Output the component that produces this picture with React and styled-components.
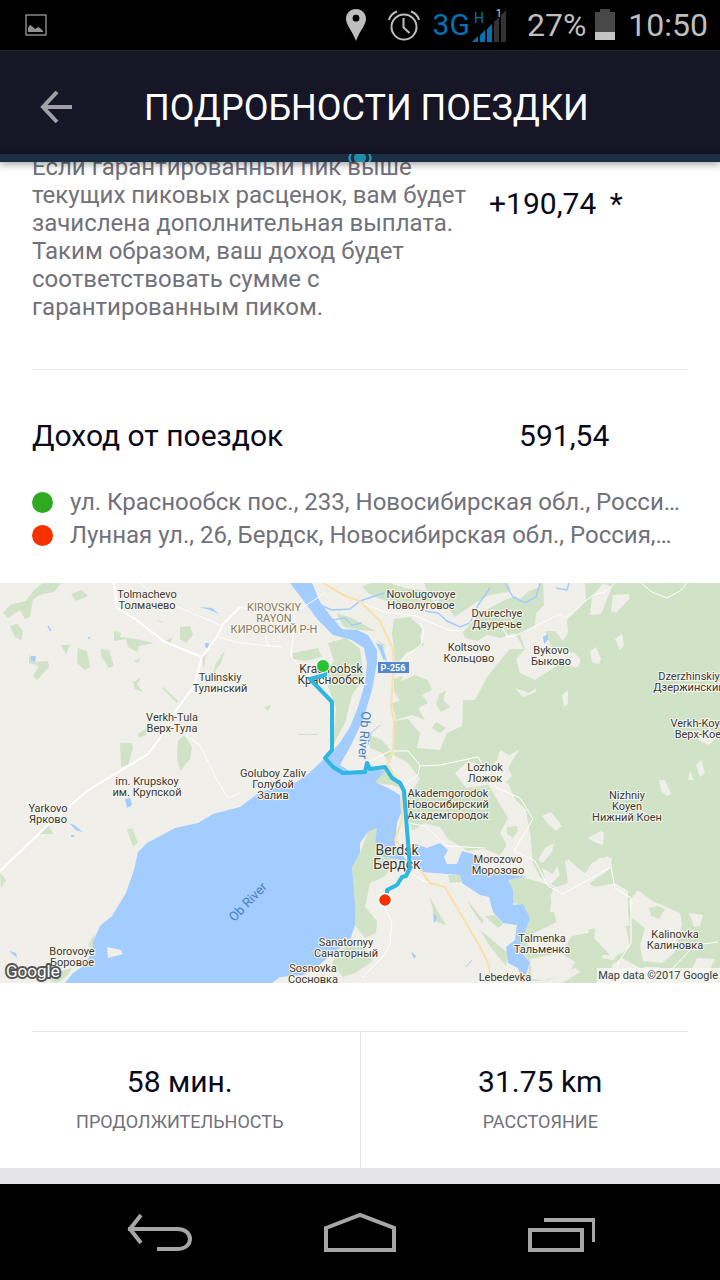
import React from "react";
import styled, { createGlobalStyle } from "styled-components";

const places = [
  { x: 147, y: 15, lines: ["Tolmachevo", "Толмачево"] },
  { x: 274, y: 28, lines: ["KIROVSKIY", "RAYON", "КИРОВСКИЙ Р-Н"], type: "district" },
  { x: 421, y: 15, lines: ["Novolugovoye", "Новолуговое"] },
  { x: 497, y: 34, lines: ["Dvurechye", "Двуречье"] },
  { x: 469, y: 68, lines: ["Koltsovo", "Кольцово"] },
  { x: 551, y: 71, lines: ["Bykovo", "Быково"] },
  { x: 220, y: 98, lines: ["Tulinskiy", "Тулинский"] },
  { x: 172, y: 138, lines: ["Verkh-Tula", "Верх-Тула"] },
  { x: 331, y: 90, lines: ["Krasnoobsk", "Краснообск"], type: "town" },
  { x: 689, y: 97, lines: ["Dzerzhinskiy", "Дзержинский"] },
  { x: 701, y: 144, lines: ["Verkh-Koyen", "Верх-Коен"] },
  { x: 485, y: 188, lines: ["Lozhok", "Ложок"] },
  { x: 147, y: 202, lines: ["im. Krupskoy", "им. Крупской"] },
  { x: 273, y: 194, lines: ["Goluboy Zaliv", "Голубой", "Залив"] },
  { x: 48, y: 229, lines: ["Yarkovo", "Ярково"] },
  { x: 448, y: 214, lines: ["Akademgorodok", "Новосибирский", "Академгородок"] },
  { x: 627, y: 216, lines: ["Nizhniy", "Koyen", "Нижний Коен"] },
  { x: 397, y: 272, lines: ["Berdsk", "Бердск"], type: "city" },
  { x: 498, y: 280, lines: ["Morozovo", "Морозово"] },
  { x: 72, y: 372, lines: ["Borovoye", "Боровое"] },
  { x: 346, y: 363, lines: ["Sanatornyy", "Санаторный"] },
  { x: 313, y: 389, lines: ["Sosnovka", "Сосновка"] },
  { x: 542, y: 359, lines: ["Talmenka", "Тальменка"] },
  { x: 505, y: 398, lines: ["Lebedevka"] },
  { x: 675, y: 355, lines: ["Kalinovka", "Калиновка"] },
];

const addresses = [
  { color: "#2fa91f", text: "ул. Краснообск пос., 233, Новосибирская обл., Росси…" },
  { color: "#f53100", text: "Лунная ул., 26, Бердск, Новосибирская обл., Россия,…" },
];

const stats = [
  { value: "58 мин.", label: "ПРОДОЛЖИТЕЛЬНОСТЬ" },
  { value: "31.75 km", label: "РАССТОЯНИЕ" },
];

function PlaceLabel({ x, y, lines, type }) {
  const step = type === "city" ? 14 : 11;
  return (
    <MapText $type={type}>
      {lines.map((line, i) => (
        <text key={line} x={x} y={y + i * step}>
          {line}
        </text>
      ))}
    </MapText>
  );
}

function StatusBar() {
  return (
    <Status>
      <svg width="22" height="22" viewBox="0 0 22 22">
        <rect x="1" y="1" width="20" height="20" fill="none" stroke="#929292" strokeWidth="1.4" />
        <path d="M3 18v-4l2-3 3 2 2 2 3-2 2 1 3 3v1z" fill="#929292" />
      </svg>
      <StatusIcons>
        <svg width="22" height="34" viewBox="0 0 22 34">
          <path
            d="M11 1C5 1 1 5.500 1 11c0 6 6.500 12 10 22 3.500-10 10-16 10-22C21 5.500 17 1 11 1zm0 5.800a3.400 3.400 0 1 1 0 6.800 3.400 3.400 0 0 1 0-6.800z"
            fill="#bebebe"
            fillRule="evenodd"
          />
        </svg>
        <svg width="34" height="34" viewBox="0 0 34 34" fill="none" stroke="#bebebe" strokeWidth="2">
          <circle cx="17" cy="19" r="12.500" />
          <path d="M16.500 10v9.500l6 5.500M2 12c1-4 4-7 8-8.500M32 12c-1-4-4-7-8-8.500" />
        </svg>
        <Signal>
          <NetworkType>3G</NetworkType>
          <svg width="36" height="36" viewBox="0 0 36 36">
            <text x="3" y="16" fontSize="14" fill="#0073b3">H</text>
            <path d="M1 35l6-6v6zM9 35V28l5-5v12zM16 35V22l5-5v18z" fill="#0073b3" />
            <path d="M23 35V15l5-5v25zM30 35V8l5-5v32z" fill="#333" />
            <text x="25" y="10" fontSize="10" fill="#ddd">1</text>
          </svg>
        </Signal>
        <StatusText>27%</StatusText>
        <svg width="22" height="34" viewBox="0 0 22 34">
          <path d="M1 4h5V1h10v3h5v28H1z" fill="#484848" />
          <path d="M1 24h20v8H1z" fill="#c4c4c4" />
        </svg>
        <StatusText>10:50</StatusText>
      </StatusIcons>
    </Status>
  );
}

function TripMap() {
  return (
    <MapView viewBox="0 0 720 400" role="img" aria-label="Маршрут поездки">
      <rect width="720" height="400" fill="#f0efea" />

      {/* forests */}
      <g fill="#d1e3c7">
        <path d="M480 0H720V400H562L580 389L575 385L547 398H527L530 380L515 357L517 342L530 335L523 322L513 320L508 297L520 294L540 299L553 304L550 329L560 329L557 339L530 352L548 358L570 350L596 345L594 355L610 372H602V375L613 377L625 364L624 355L618 346L630 342L628 330V308L615 300L595 304L588 300L605 290L612 283L608 273L592 280L585 291L568 276L566 286L574 299L556 304L540 294L533 280L530 250L526 227L512 213L505 200L512 193L508 185L519 167L509 172L500 167L497 177L490 185L468 178L455 190L466 205L488 202L505 215L508 235L500 250L507 262L500 272L484 266L468 268L448 256L440 244L425 240L412 248L405 218L420 196L408 180L394 172V138L408 136L420 150L417 165L440 167L447 150L462 143L463 117L475 117L487 94L503 74L510 66L524 66L515 50L500 55L480 50L465 45L480 30L505 17L540 4V0z" />
        <path d="M394 36L410 34L422 45L420 55L424 62L406 70L400 79L395 78L392 50zM394 96L403 93L400 99L415 92L428 97L432 107L422 112L428 120L418 125L425 137L412 132L396 137L392 120L400 118L394 108zM440 110L446 108L443 117L450 124L441 129L436 121zM436 139L446 145L440 150L432 145z" />
        <path d="M390 0H372L362 3L368 10L385 18L415 25L440 16L430 8L405 5zM424 0H515L508 9L490 12L475 20L455 34L444 20L430 16zM462 47L480 42L490 50L477 58L465 55z" />
        <path d="M336 30L352 35L368 44L376 48L360 47L344 44zM384 66L380 61L377 57L385 62zM328 60L346 55L360 66L364 95L352 112L345 140L333 162L336 125L324 92L334 78z" />
        <path d="M293 70L318 65L322 74L305 78L293 76zM298 151L318 151V152H298zM335 164L345 158L337 173z" />
        <path d="M3 30L10 22L26 18L34 7L43 0H61L54 9L42 11L33 16L30 34L25 36L20 27L8 35zM71 11L82 7L88 13L76 18zM10 43L17 41L23 48L21 57L15 54zM61 62H70L66 71zM78 65L87 68L90 84L85 87L77 80zM101 66L109 67L114 83L109 85L101 73zM29 71L34 79L48 78L49 84L37 97L33 93L39 83L29 80z" />
        <path d="M120 160L132 160L133 165L128 182L121 184zM178 158L184 152L192 164L190 176L180 188L177 175zM114 48L121 50L120 54L136 56L154 60L139 63L137 69L128 64L126 56L114 58zM180 44L190 43L193 52L186 60L180 56zM166 58L172 54L171 60zM156 36L164 40L160 39zM138 151L148 144L146 152L139 155z" />
        <path d="M134 78L141 75L138 80zM133 99L141 95L137 101L143 109L135 106zM202 75L206 69L204 87zM215 82L225 67L221 80L213 91zM163 104L178 118L177 120L162 105z" />
        <path d="M40 250L48 242L53 250V251H40zM127 247L132 245L138 260L133 263zM0 290L6 297L1 305zM49 398L62 388L72 385L67 393L57 400zM88 363L95 350L93 365zM264 124L271 122L268 128z" />
        <path d="M360 270L368 249L377 245L375 262L380 271L397 277L384 294L370 300L365 324L377 338L376 350L365 355L355 342L355 320L352 284zM337 372L350 358L365 366L373 378L355 390L343 394L332 380z" />
        <path d="M377 188L390 183L400 205L392 202L375 200zM370 152L382 157L393 170L390 180L382 170L370 165zM448 292H461V299L450 300zM430 314L440 332L446 342L435 338z" />
        <path d="M468 318L484 338L482 341L471 325zM480 347L508 370L506 383L489 362zM485 333L495 332L503 341L498 345z" />
      </g>

      {/* clearings */}
      <g fill="#f0efea">
        <path d="M543 0H585L586 18L567 37L568 50L563 58L555 48H545L552 65L575 70L581 77L578 84L566 83L558 82L535 97L520 90L516 76L525 66L520 52L535 42L536 30L544 22z" />
        <path d="M592 14L603 0L612 4L601 31L590 32zM613 12L629 11L630 15L616 30L611 28zM515 105L529 110L536 105V109L523 114zM562 112L568 107V121L564 124zM590 68L596 64L601 76L599 81L592 79zM615 56L622 51L624 62L620 67zM508 0H525L527 10L520 16L513 12z" />
        <path d="M696 182L701 177L705 190L700 194zM690 188L694 197H688zM700 151L709 145L716 155L709 162L698 157z" />
        <path d="M542 233L551 229L562 243L556 248L548 241zM588 255L601 248L604 250L603 262L594 259zM538 277L545 265L554 260L552 269L543 280zM542 285L553 291L557 283L560 292L550 302L545 297zM565 277L585 290L599 275L612 275L611 282L587 303L616 305L618 309L607 327L594 323L584 332L589 350L572 353L560 371L530 368L525 353L545 351L557 343L554 328L550 312L568 300z" />
        <path d="M629 319L638 307L652 318L680 330L682 341L674 370L662 380L643 378L640 362L645 345L632 335zM689 330L703 332L700 343L694 344zM609 350L619 345L626 344L630 364L622 370L612 374zM595 340L600 338L602 352L595 350zM530 376L560 370L575 379L570 388L545 398L532 396zM612 382L622 375L640 385L628 400H614zM644 384L660 384L655 395L645 392z" />
        <path d="M659 197H665L671 211L667 213L661 208zM697 375L715 376L708 390H690z" />
        <path d="M489 203L508 200L527 245L530 280L515 282L505 275L511 262L508 235z" />
      </g>
      <path d="M507 244L517 243L518 248L513 255L507 251zM649 325L658 323L665 326L659 336L651 333z" fill="#d1e3c7" />

      {/* water */}
      <g fill="#a3ccff">
        <path d="M290 0L303 17L318 37L333 52L352 57L364 65L367 80L365 100L358 124L350 144L337 164L323 177L307 192L295 200L260 209L240 224L213 231L198 240L175 245L147 260L138 269L134 287L126 310L112 333L100 343L93 359V369L82 384L73 390L65 400H272L280 394L303 392L317 384L333 370L350 357L355 342V320L352 284L360 270V260L368 249L377 245L375 260L378 272L395 276L407 278L395 262L397 240L401 230L400 212L388 205L375 199L385 188L372 186L350 188L340 182L350 164L363 137L372 107L377 80V67L368 52L357 47L342 46L332 35L320 19L312 0z" />
        <path d="M410 277L413 260L427 265L440 260L448 267L444 274L447 281L457 281L462 268L480 273V287L523 294L508 297L513 307V322L523 321L530 335L523 354L520 367L530 380L523 400L518 385L508 380L506 364L515 357L517 342L503 340L493 329L489 314L480 312L462 300L460 292L423 289L416 280z" />
        <path d="M376 60L382 62L387 78L383 76L380 68zM199 24L212 25L219 31L210 27zM125 216L130 215L132 222L127 225zM69 240L74 242L83 249L76 247zM9 368L16 370L17 375zM71 252H74V254H71zM31 73L36 73L35 79L31 77zM205 60L209 60L208 66L205 64zM543 54L548 51V57L544 61zM433 330L437 334L434 340zM411 368L416 373L414 376z" />
      </g>
      <path d="M107 364L121 367L123 371L108 375zM342 182L350 172L360 181L350 189zM360 176L367 173L375 177L376 184L366 184z" fill="#f0efea" />
      <path d="M315 20L332 27L350 26L360 18L384 10M333 37L345 35L352 42L362 40M425 28L438 30L447 38L460 44L470 40L478 22L490 5M505 0L513 14L525 20L536 14L540 0M556 5L567 7L569 0M48 43L51 48M88 56L90 54" fill="none" stroke="#a3ccff" strokeWidth="1.5" />
      <path d="M368 162L371 150L380 142M466 384L472 377M500 292L526 294" fill="none" stroke="#a3ccff" strokeWidth="1" />

      {/* roads */}
      <g fill="none" stroke="#fff" strokeWidth="1">
        <path d="M114 0L117 25L135 36L165 59L202 74L218 52L223 41L240 24M202 74L194 103L174 130L160 155L148 171L87 208L48 242L0 288" strokeWidth="2" />
        <path d="M140 0L155 14L220 42M218 54L240 60L282 64M240 24L272 32L302 25L325 10M186 152L200 162L217 197L228 215L240 210" />
        <path d="M360 19L385 29L416 33L448 47L463 48L475 35M420 40L424 48L421 62L403 75L395 84M502 44L508 54L515 53L560 31L565 35L593 12L605 9L615 0M641 0L652 9L667 15L680 8L687 0" />
        <path d="M295 32L291 74L312 95M265 50L268 64M366 180L390 168L408 168L420 182L418 192L404 202M420 183L440 182L478 174L497 205L520 215L533 236L514 268L535 278M408 240L425 243L447 263L485 265" />
        <path d="M535 278L548 303L563 311L611 284L615 305L631 315L631 360L618 380L615 400M410 290L428 300M385 325L392 340L390 362L382 375L362 395M670 388L695 362L718 359" />
      </g>
      <path
        d="M323 0L345 13L360 18L380 38L392 64L394 80L391 124L394 137L393 167L387 182L402 204V237L395 257L420 287L430 300L445 304L480 364L488 380L492 400"
        fill="none"
        stroke="#fbe0a8"
        strokeWidth="2"
      />

      {places.map((place) => (
        <PlaceLabel key={place.lines[0]} {...place} />
      ))}
      <MapText $type="water">
        <text transform="translate(251 322) rotate(-46)">Ob River</text>
        <text transform="translate(360 152) rotate(94)">Ob River</text>
      </MapText>

      <rect x="378" y="79" width="31" height="11" fill="#5587ce" />
      <RoadSign x="393" y="88">P-256</RoadSign>

      <path
        d="M325 89V92L310 96L332 119V167L325 175L333 184L343 190L365 189L367 180L370 186L385 184L392 195L400 200L404 208L410 285L406 293L402 294L397 302L387 307V312"
        fill="none"
        stroke="#2db7e1"
        strokeWidth="4"
        strokeLinejoin="round"
      />
      <circle cx="323" cy="83" r="6.500" fill="#28c132" stroke="#fff" strokeWidth="1" />
      <circle cx="385" cy="317" r="6.500" fill="#f53100" stroke="#fff" strokeWidth="1.500" />

      <rect x="597" y="385" width="123" height="15" fill="#f8f8f5" fillOpacity="0.8" />
      <Copyright x="718" y="396">Map data ©2017 Google</Copyright>
      <MapLogo x="6" y="394">Google</MapLogo>
    </MapView>
  );
}

function App() {
  return (
    <Screen>
      <GlobalStyle />
      <StatusBar />
      <Header>
        <BackButton type="button" aria-label="Назад">
          <svg width="32" height="34" viewBox="0 0 32 34" fill="none" stroke="#a09fa5" strokeWidth="4">
            <path d="M32 16H3M17 1L3 16L17 31" />
          </svg>
        </BackButton>
        <Title>ПОДРОБНОСТИ ПОЕЗДКИ</Title>
      </Header>
      <Progress>
        <svg width="24" height="8" viewBox="0 0 24 8">
          <circle cx="12" cy="4" r="6" fill="#1f8da8" />
          <path d="M3 0Q0 4 3 8M21 0Q24 4 21 8" fill="none" stroke="#1fa6c4" strokeWidth="2" />
        </svg>
      </Progress>

      <Content>
        <BonusRow>
          <Description>
            Если гарантированный пик выше текущих пиковых расценок, вам будет зачислена
            дополнительная выплата. Таким образом, ваш доход будет соответствовать сумме с
            гарантированным пиком.
          </Description>
          <Bonus>
            +190,74 <span>*</span>
          </Bonus>
        </BonusRow>

        <IncomeRow>
          <Income>Доход от поездок</Income>
          <Total>591,54</Total>
        </IncomeRow>

        <Addresses>
          {addresses.map((item) => (
            <Address key={item.text}>
              <Dot $color={item.color} />
              <span>{item.text}</span>
            </Address>
          ))}
        </Addresses>

        <TripMap />

        <Divider />
        <Stats>
          {stats.map((item) => (
            <Stat key={item.label}>
              <StatValue>{item.value}</StatValue>
              <StatLabel>{item.label}</StatLabel>
            </Stat>
          ))}
        </Stats>
      </Content>

      <NavBar>
        <NavButton type="button" aria-label="Назад">
          <svg width="68" height="40" viewBox="0 0 68 40">
            <path d="M2 17H51C61 17 64 23 64 27C64 32 60 37 51 37H31M15 3L4 17L15 31" />
          </svg>
        </NavButton>
        <NavButton type="button" aria-label="Домой">
          <svg width="74" height="40" viewBox="0 0 74 40">
            <path d="M3 16L37 3L71 16V38H3z" />
          </svg>
        </NavButton>
        <NavButton type="button" aria-label="Недавние приложения">
          <svg width="70" height="40" viewBox="0 0 70 40">
            <path d="M5 18H57V38H5zM19 8H69V30" />
          </svg>
        </NavButton>
      </NavBar>
    </Screen>
  );
}
export default App;

const GlobalStyle = createGlobalStyle`
  * {
    box-sizing: border-box;
  }
  body {
    margin: 0;
    background: #fff;
    color: #09091a;
    font-family: Roboto, "Noto Sans", sans-serif;
  }
  button {
    padding: 0;
    border: 0;
    background: none;
    cursor: pointer;
  }
  svg {
    display: block;
  }
`;

const Screen = styled.div`
  display: flex;
  flex-direction: column;
  min-height: 100vh;
`;

const Status = styled.div`
  display: flex;
  align-items: center;
  justify-content: space-between;
  height: 50px;
  padding: 0 12px 0 25px;
  background: #000;
`;

const StatusIcons = styled.div`
  display: flex;
  align-items: center;
  gap: 20px;

  > :nth-child(3) {
    margin-left: -8px;
  }
  > :nth-child(5) {
    margin: 0 -8px 0 -12px;
  }
`;

const Signal = styled.div`
  display: flex;
  align-items: center;
  gap: 1px;
`;

const NetworkType = styled.span`
  color: #0073b3;
  font-size: 30px;
  line-height: 40px;
`;

const StatusText = styled.span`
  color: #bebebe;
  font-size: 32px;
  line-height: 40px;
`;

const Header = styled.header`
  display: flex;
  align-items: center;
  gap: 72px;
  height: 104px;
  padding: 10px 40px 0;
  background: #171626;
  border-top: 1px solid #242334;
`;

const BackButton = styled.button`
  display: flex;
`;

const Title = styled.h1`
  margin: 0;
  color: #fff;
  font-size: 36px;
  font-weight: 400;
  line-height: 44px;
`;

const Progress = styled.div`
  display: flex;
  justify-content: center;
  z-index: 1;
  height: 8px;
  background: #1b2f44;
  box-shadow: 0 1px 8px rgba(0, 0, 0, 0.5);
`;

const Content = styled.main`
  flex: 1;
  overflow: hidden;
  border-bottom: 16px solid #e5e5e8;
`;

const Row = styled.div`
  display: grid;
  grid-template-columns: 68% 1fr;
  margin: 0 32px;
`;

/* scrolled partly under the header */
const BonusRow = styled(Row)`
  margin-top: -9px;
  padding-bottom: 48px;
  border-bottom: 1px solid #e5e5e8;
`;

const Description = styled.p`
  margin: 0;
  color: #71717b;
  font-size: 24px;
  line-height: 28px;
`;

const Bonus = styled.div`
  padding: 33px 0 0 11px;
  font-size: 30px;
  line-height: 36px;
  white-space: nowrap;

  span {
    margin-left: 6px;
  }
`;

const IncomeRow = styled(Row)`
  padding-top: 48px;
  font-size: 30px;
  line-height: 36px;
`;

const Income = styled.div``;

const Total = styled.div`
  padding-left: 41px;
`;

const Addresses = styled.ul`
  margin: 0;
  padding: 32px 32px 31px;
  list-style: none;
`;

const Address = styled.li`
  display: flex;
  align-items: center;
  gap: 17px;
  color: #71717b;
  font-size: 24px;
  line-height: 33px;
  white-space: nowrap;
`;

const Dot = styled.span`
  flex: none;
  width: 21px;
  height: 21px;
  border-radius: 50%;
  background: ${(props) => props.$color};
`;

const MapView = styled.svg`
  width: 100%;
  height: auto;
`;

const labelColors = {
  district: "#8a7a5c",
  water: "#4a7fc8",
};

const labelSizes = {
  town: "12px",
  water: "13px",
  city: "14px",
};

const MapText = styled.g`
  fill: ${(props) => labelColors[props.$type] || "#3d392d"};
  stroke: ${(props) => (props.$type === "water" ? "none" : "#f7f6f2")};
  stroke-width: 2px;
  paint-order: stroke;
  text-anchor: middle;
  font-size: ${(props) => labelSizes[props.$type] || "11px"};
`;

const RoadSign = styled.text`
  fill: #fff;
  font-size: 9px;
  font-weight: 700;
  text-anchor: middle;
`;

const Copyright = styled.text`
  fill: #3d3d3d;
  font-size: 11px;
  text-anchor: end;
`;

const MapLogo = styled.text`
  fill: #fff;
  stroke: #555;
  stroke-width: 4px;
  stroke-linejoin: round;
  paint-order: stroke;
  font-size: 17px;
`;

const Divider = styled.hr`
  height: 1px;
  margin: 48px 32px 0;
  border: 0;
  background: #e5e5e8;
`;

const Stats = styled.div`
  display: flex;
`;

const Stat = styled.div`
  flex: 1;
  padding: 32px 0;
  text-align: center;

  &:first-child {
    border-right: 1px solid #e5e5e8;
  }
`;

const StatValue = styled.div`
  font-size: 30px;
  line-height: 36px;
`;

const StatLabel = styled.div`
  margin-top: 8px;
  color: #71717b;
  font-size: 18px;
  line-height: 28px;
`;

const NavBar = styled.nav`
  display: flex;
  height: 96px;
  padding: 0 60px;
  background: #000;
`;

const NavButton = styled.button`
  display: flex;
  flex: 1;
  align-items: center;
  justify-content: center;

  path {
    fill: none;
    stroke: #a6a6a6;
    stroke-width: 4px;
  }
`;
